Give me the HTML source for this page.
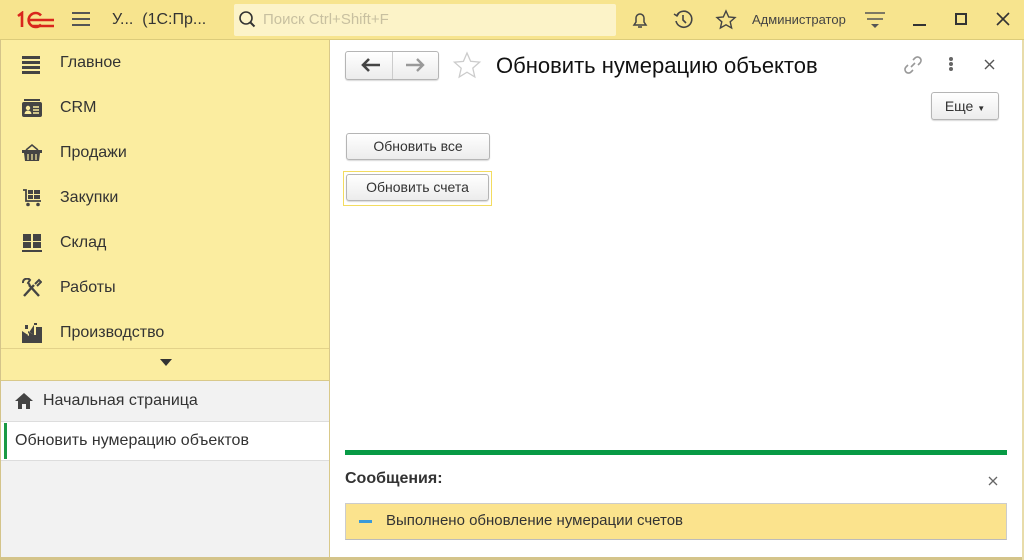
<!DOCTYPE html>
<html><head><meta charset="utf-8"><style>
*{box-sizing:border-box;margin:0;padding:0}
body{width:1024px;height:560px;overflow:hidden;font-family:"Liberation Sans","Noto Sans CJK SC",sans-serif;background:#fff;position:relative;color:#333}
.abs{position:absolute}
#top{left:0;top:0;width:1024px;height:40px;background:#f7e48e;border-bottom:1px solid #dccb7a}
#side{left:0;top:40px;width:330px;height:520px;background:#fbeda0;border-right:1px solid #d9c98a;border-left:1px solid #d4c48a}
.nav{position:absolute;left:59px;font-size:16px;color:#333}
.ico{position:absolute;left:21px}
#bot{left:1px;top:380px;width:328px;height:178px;background:#f2f2f2;border-top:1px solid #d9c98a}
.btn{position:absolute;border:1px solid #b5b5b5;border-radius:3px;background:linear-gradient(#fff,#ececec);font-size:14px;color:#333;text-align:center;box-shadow:0 1px 1px rgba(0,0,0,.15)}
</style></head><body>
<div id="top" class="abs">
 <svg class="abs" style="left:16px;top:11px" width="40" height="18" viewBox="0 0 40 18"><path d="M2 5l4-3v14" stroke="#d9261c" stroke-width="2.6" fill="none"/><path d="M25 4.5A7 7 0 1 0 25 13.5" stroke="#d9261c" stroke-width="2.6" fill="none"/><path d="M14 9h24M17 15h21" stroke="#d9261c" stroke-width="2.4"/></svg>
 <div class="abs" style="left:72px;top:12px;width:18px;height:2px;background:#555;box-shadow:0 6px 0 #555,0 12px 0 #555"></div>
 <div class="abs" style="left:112px;top:11px;font-size:16px;color:#333">У...&nbsp;&nbsp;(1С:Пр...</div>
 <div class="abs" style="left:234px;top:4px;width:382px;height:32px;background:#fcf3c8;border-radius:2px"></div>
 <svg class="abs" style="left:238px;top:10px" width="20" height="20"><circle cx="8" cy="8" r="6" stroke="#333" stroke-width="1.6" fill="none"/><path d="M12.5 12.5l4 4" stroke="#333" stroke-width="2"/></svg>
 <div class="abs" style="left:263px;top:11px;font-size:15px;color:#c8c0a0">Поиск Ctrl+Shift+F</div>
 <svg class="abs" style="left:630px;top:10px" width="20" height="20"><path d="M4 15h12l-2-3V8a4 4 0 0 0-8 0v4z" stroke="#444" stroke-width="1.5" fill="none"/><path d="M8 17h4" stroke="#444" stroke-width="1.5"/></svg>
 <svg class="abs" style="left:672px;top:9px" width="22" height="22"><path d="M5 6a8 8 0 1 1-1 6" stroke="#444" stroke-width="1.6" fill="none"/><path d="M2 5l3 2 2-3" stroke="#444" stroke-width="1.5" fill="none"/><path d="M11 6v5l3 3" stroke="#444" stroke-width="1.6" fill="none"/></svg>
 <svg class="abs" style="left:715px;top:9px" width="22" height="22"><path d="M11 2l2.7 6 6.3.6-4.8 4.2 1.4 6.2L11 15.8 5.4 19l1.4-6.2L2 8.6l6.3-.6z" stroke="#444" stroke-width="1.4" fill="none"/></svg>
 <div class="abs" style="left:752px;top:12px;font-size:13px;color:#444">Администратор</div>
 <svg class="abs" style="left:864px;top:11px" width="22" height="20"><path d="M1 2h20M3 8h16" stroke="#555" stroke-width="1.6"/><path d="M7 13h8l-4 4z" fill="#555"/></svg>
 <div class="abs" style="left:913px;top:24px;width:13px;height:2px;background:#333"></div>
 <div class="abs" style="left:955px;top:13px;width:12px;height:12px;border:2px solid #333"></div>
 <svg class="abs" style="left:996px;top:12px" width="14" height="14"><path d="M1 1l12 12M13 1L1 13" stroke="#333" stroke-width="1.6"/></svg>
</div>
<div id="side" class="abs">
 <div class="ico" style="top:16px;width:18px;height:3px;background:#444;box-shadow:0 5px 0 #444,0 10px 0 #444,0 15px 0 #444"></div>
 <div class="nav" style="top:14px">Главное</div>
 <svg class="ico" style="top:59px" width="20" height="18"><rect x="0" y="3" width="20" height="15" rx="2" fill="#444"/><rect x="2" y="0" width="16" height="2" fill="#444"/><circle cx="6" cy="9" r="2.2" fill="#fbeda0"/><path d="M2.5 15a3.5 3.5 0 0 1 7 0z" fill="#fbeda0"/><path d="M11 8h6M11 11h6M11 14h6" stroke="#fbeda0" stroke-width="1.4"/></svg>
 <div class="nav" style="top:59px">CRM</div>
 <svg class="ico" style="top:104px" width="20" height="18"><path d="M4 6L10 1l6 5" stroke="#444" stroke-width="1.5" fill="none"/><rect x="0" y="6" width="20" height="3" fill="#444"/><path d="M2 9h16l-1 8H3z" fill="#444"/><path d="M6 10v6M10 10v6M14 10v6" stroke="#fbeda0" stroke-width="1.2"/></svg>
 <div class="nav" style="top:104px">Продажи</div>
 <svg class="ico" style="top:149px" width="20" height="18"><path d="M1 1h3v11h15" stroke="#444" stroke-width="1.8" fill="none"/><rect x="6" y="1" width="5" height="4" fill="#444"/><rect x="12" y="1" width="6" height="4" fill="#444"/><rect x="6" y="6" width="5" height="4" fill="#444"/><rect x="12" y="6" width="6" height="4" fill="#444"/><circle cx="6" cy="15.5" r="1.8" fill="#444"/><circle cx="16" cy="15.5" r="1.8" fill="#444"/></svg>
 <div class="nav" style="top:149px">Закупки</div>
 <svg class="ico" style="top:194px" width="20" height="18"><rect x="1" y="0" width="8" height="7" fill="#444"/><rect x="11" y="0" width="8" height="7" fill="#444"/><rect x="1" y="8" width="8" height="6" fill="#444"/><rect x="11" y="8" width="8" height="6" fill="#444"/><rect x="0" y="16" width="20" height="2" fill="#444"/></svg>
 <div class="nav" style="top:194px">Склад</div>
 <svg class="ico" style="top:238px" width="20" height="20"><path d="M2 18L12 7M7 7l10 11" stroke="#444" stroke-width="2.4"/><path d="M1 5a4 4 0 0 1 7-3l-2 3 2 2" stroke="#444" stroke-width="2" fill="none"/><path d="M13 6l4-4 2 2-4 4" stroke="#444" stroke-width="2" fill="none"/></svg>
 <div class="nav" style="top:239px">Работы</div>
 <svg class="ico" style="top:283px" width="20" height="20"><path d="M0 20V8l6 4V8l6 4V0h3v2h-3M12 12h8v8z" fill="#444"/><path d="M0 20V9l7 4V9l7 4V4h6v16z" fill="#444"/><rect x="3" y="2" width="3" height="4" fill="#444"/></svg>
 <div class="nav" style="top:284px">Производство</div>
 <div class="abs" style="left:0;top:308px;width:328px;height:1px;background:#e3d28a"></div>
 <svg class="abs" style="left:159px;top:319px" width="12" height="8"><path d="M0 0h12L6 7z" fill="#333"/></svg>
</div>
<div id="bot" class="abs">
 <svg class="abs" style="left:14px;top:12px" width="18" height="16"><path d="M9 0L0 8h3v8h4v-5h4v5h4V8h3z" fill="#444"/></svg>
 <div class="abs" style="left:42px;top:11px;font-size:16px;color:#333">Начальная страница</div>
 <div class="abs" style="left:0;top:40px;width:328px;height:40px;background:#fff;border-top:1px solid #ddd;border-bottom:1px solid #ddd"></div>
 <div class="abs" style="left:3px;top:42px;width:3px;height:36px;background:#1a9a45"></div>
 <div class="abs" style="left:14px;top:51px;font-size:16px;color:#333">Обновить нумерацию объектов</div>
</div>
<div class="abs" style="left:0;top:557px;width:1024px;height:3px;background:#d4c48a"></div>
<div class="abs" style="left:1022px;top:40px;width:2px;height:520px;background:#e8dcaa"></div>
<!-- content -->
<div class="btn" style="left:345px;top:51px;width:94px;height:29px;padding:0"></div>
<div class="abs" style="left:392px;top:52px;width:1px;height:27px;background:#ccc"></div>
<svg class="abs" style="left:360px;top:58px" width="22" height="14"><path d="M3 7h17M9 1L3 7l6 6" stroke="#444" stroke-width="2.6" fill="none"/></svg>
<svg class="abs" style="left:404px;top:58px" width="22" height="14"><path d="M2 7h16M13 1l6 6-6 6" stroke="#999" stroke-width="2.4" fill="none"/></svg>
<svg class="abs" style="left:452px;top:51px" width="30" height="30"><path d="M15 2l3.6 8.3 9 .8-6.8 6 2 8.8L15 21.2 7.2 26l2-8.8-6.8-6 9-.8z" stroke="#ccc" stroke-width="1.3" fill="none"/></svg>
<div class="abs" style="left:496px;top:53px;font-size:22px;color:#111">Обновить нумерацию объектов</div>
<svg class="abs" style="left:902px;top:54px" width="22" height="22"><path d="M9 13l4-4M11 6l2-2a3.5 3.5 0 0 1 5 5l-2 2M11 16l-2 2a3.5 3.5 0 0 1-5-5l2-2" stroke="#999" stroke-width="1.6" fill="none"/></svg>
<div class="abs" style="left:949px;top:57px;width:4px;height:4px;background:#666;border-radius:2px;box-shadow:0 5px 0 #666,0 10px 0 #666"></div>
<svg class="abs" style="left:984px;top:59px" width="11" height="11"><path d="M1 1l9 9M10 1l-9 9" stroke="#555" stroke-width="1.4"/></svg>
<div class="btn" style="left:931px;top:92px;width:68px;height:28px;line-height:26px;font-size:14px">Еще <span style="font-size:8px">▼</span></div>
<div class="btn" style="left:346px;top:133px;width:144px;height:27px;line-height:25px">Обновить все</div>
<div class="abs" style="left:343px;top:171px;width:149px;height:35px;border:1px solid #f3dc60"></div>
<div class="btn" style="left:346px;top:174px;width:143px;height:27px;line-height:25px">Обновить счета</div>
<div class="abs" style="left:345px;top:450px;width:662px;height:5px;background:#079a45"></div>
<div class="abs" style="left:345px;top:470px;font-size:16px;font-weight:bold;color:#333">Сообщения:</div>
<svg class="abs" style="left:988px;top:476px" width="10" height="10"><path d="M1 1l8 8M9 1l-8 8" stroke="#666" stroke-width="1.3"/></svg>
<div class="abs" style="left:345px;top:503px;width:662px;height:37px;background:#fbe38d;border:1px solid #ccc;border-bottom-color:#bbb"></div>
<div class="abs" style="left:359px;top:520px;width:13px;height:3px;background:#3a9ad9"></div>
<div class="abs" style="left:386px;top:512px;font-size:15px;color:#333">Выполнено обновление нумерации счетов</div>
</body></html>
